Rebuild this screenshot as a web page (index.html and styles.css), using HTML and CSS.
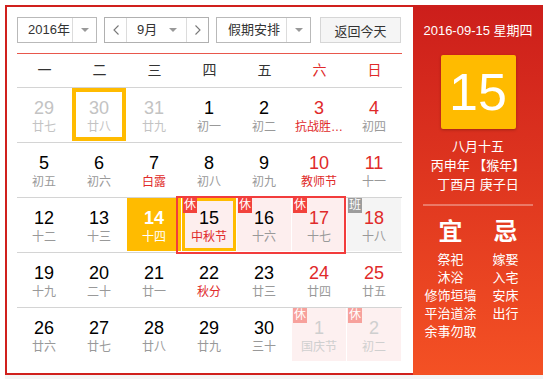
FILE: index.html
```html
<!DOCTYPE html>
<html lang="zh">
<head>
<meta charset="utf-8">
<title>万年历</title>
<link rel="stylesheet" href="styles.css">
</head>
<body>
<div class="calendar">
  <div class="main">
    <div class="toolbar">
      <div class="select year"><span class="sel-text">2016年</span><span class="sel-arrow"><i class="tri"></i></span></div>
      <div class="month-group">
        <span class="nav"><svg width="6" height="10" viewBox="0 0 6 10"><polyline points="5.5,0.5 1,5 5.5,9.5" fill="none" stroke="#777" stroke-width="1.1"/></svg></span>
        <span class="month-sel"><span>9月</span><i class="tri"></i></span>
        <span class="nav next"><svg width="6" height="10" viewBox="0 0 6 10"><polyline points="0.5,0.5 5,5 0.5,9.5" fill="none" stroke="#777" stroke-width="1.1"/></svg></span>
      </div>
      <div class="select holiday"><span class="sel-text">假期安排</span><span class="sel-arrow"><i class="tri"></i></span></div>
      <button class="today-btn">返回今天</button>
    </div>
    <div class="weekdays">
      <span>一</span><span>二</span><span>三</span><span>四</span><span>五</span><span class="wk">六</span><span class="wk">日</span>
    </div>
    <div class="week">
      <div class="day other"><b>29</b><i>廿七</i></div>
      <div class="day other hover"><b>30</b><i>廿八</i></div>
      <div class="day other"><b>31</b><i>廿九</i></div>
      <div class="day"><b>1</b><i>初一</i></div>
      <div class="day"><b>2</b><i>初二</i></div>
      <div class="day wk fest"><b>3</b><i>抗战胜…</i></div>
      <div class="day wk"><b>4</b><i>初四</i></div>
    </div>
    <div class="week">
      <div class="day"><b>5</b><i>初五</i></div>
      <div class="day"><b>6</b><i>初六</i></div>
      <div class="day fest"><b>7</b><i>白露</i></div>
      <div class="day"><b>8</b><i>初八</i></div>
      <div class="day"><b>9</b><i>初九</i></div>
      <div class="day wk fest"><b>10</b><i>教师节</i></div>
      <div class="day wk"><b>11</b><i>十一</i></div>
    </div>
    <div class="week">
      <div class="day"><b>12</b><i>十二</i></div>
      <div class="day"><b>13</b><i>十三</i></div>
      <div class="day today"><b>14</b><i>十四</i></div>
      <div class="day rest sel fest"><span class="badge">休</span><b>15</b><i>中秋节</i></div>
      <div class="day rest"><span class="badge">休</span><b>16</b><i>十六</i></div>
      <div class="day rest wk"><span class="badge">休</span><b>17</b><i>十七</i></div>
      <div class="day work wk"><span class="badge">班</span><b>18</b><i>十八</i></div>
      <div class="range"></div>
    </div>
    <div class="week">
      <div class="day"><b>19</b><i>十九</i></div>
      <div class="day"><b>20</b><i>二十</i></div>
      <div class="day"><b>21</b><i>廿一</i></div>
      <div class="day fest"><b>22</b><i>秋分</i></div>
      <div class="day"><b>23</b><i>廿三</i></div>
      <div class="day wk"><b>24</b><i>廿四</i></div>
      <div class="day wk"><b>25</b><i>廿五</i></div>
    </div>
    <div class="week">
      <div class="day"><b>26</b><i>廿六</i></div>
      <div class="day"><b>27</b><i>廿七</i></div>
      <div class="day"><b>28</b><i>廿八</i></div>
      <div class="day"><b>29</b><i>廿九</i></div>
      <div class="day"><b>30</b><i>三十</i></div>
      <div class="day rest faded"><span class="badge">休</span><b>1</b><i>国庆节</i></div>
      <div class="day rest faded"><span class="badge">休</span><b>2</b><i>初二</i></div>
    </div>
  </div>
  <div class="side">
    <div class="s-date">2016-09-15 星期四</div>
    <div class="s-big">15</div>
    <div class="s-lunar">
      <div>八月十五</div>
      <div>丙申年 【猴年】</div>
      <div>丁酉月 庚子日</div>
    </div>
    <div class="s-line"></div>
    <div class="yiji">
      <div class="col">
        <h3>宜</h3>
        <ul><li>祭祀</li><li>沐浴</li><li>修饰垣墙</li><li>平治道涂</li><li>余事勿取</li></ul>
      </div>
      <div class="col">
        <h3>忌</h3>
        <ul><li>嫁娶</li><li>入宅</li><li>安床</li><li>出行</li></ul>
      </div>
    </div>
  </div>
</div>
<div class="under"></div>
</body>
</html>
```
FILE: styles.css
```css
* { box-sizing: border-box; }
body {
  margin: 0;
  background: #fff;
  font-family: "Liberation Sans", "Noto Sans CJK SC", sans-serif;
  color: #333;
}
.calendar {
  display: flex;
  width: 538px;
  height: 370px;
  margin: 5px 0 0 5px;
}
.main {
  width: 408px;
  border: 2px solid #d0201d;
  border-right: 0;
  padding: 10px 11px 11px 10px;
}
.toolbar {
  display: flex;
  height: 37px;
  padding-bottom: 10px;
  border-bottom: 1px solid #e8574c;
  font-size: 13px;
}
.select {
  display: flex;
  height: 26px;
  border: 1px solid #b9b9b9;
  background: #fff;
}
.year { width: 80px; margin-right: 7px; }
.holiday { width: 95px; margin-left: 7px; }
.sel-text {
  flex: 1;
  line-height: 24px;
  padding-left: 10px;
}
.holiday .sel-text { padding-left: 11px; }
.sel-arrow {
  width: 24px;
  border-left: 1px solid #dcdcdc;
  display: flex;
  align-items: center;
  justify-content: center;
}
.tri {
  display: block;
  width: 0;
  height: 0;
  border-left: 4px solid transparent;
  border-right: 4px solid transparent;
  border-top: 4px solid #999;
}
.month-group {
  display: flex;
  width: 105px;
  height: 26px;
  border: 1px solid #b0b0b0;
}
.nav {
  width: 22px;
  display: flex;
  align-items: center;
  justify-content: center;
  border-right: 1px solid #dcdcdc;
}
.nav.next { border-right: 0; border-left: 1px solid #dcdcdc; }
.month-sel {
  flex: 1;
  display: flex;
  align-items: center;
  padding: 0 9px 0 10px;
  line-height: 24px;
}
.month-sel .tri { margin-left: auto; }
.today-btn {
  margin-left: 9px;
  width: 81px;
  height: 26px;
  border: 1px solid #d6d6d6;
  background: #f5f5f5;
  color: #333;
  font-family: inherit;
  font-size: 13px;
  padding: 0;
}
.weekdays {
  display: grid;
  grid-template-columns: repeat(7, 55px);
  height: 33px;
  line-height: 33px;
  text-align: center;
  font-size: 14px;
  color: #333;
}
.weekdays .wk { color: #e02a2a; }
.week {
  position: relative;
  display: grid;
  grid-template-columns: repeat(7, 55px);
  height: 55px;
  border-top: 1px solid #d4d4d4;
}
.day {
  position: relative;
  margin: 0 1px 1px 0;
  text-align: center;
}
.day b {
  display: block;
  font-weight: normal;
  font-size: 18px;
  line-height: 20px;
  padding-top: 10px;
  color: #000;
}
.day i {
  display: block;
  font-style: normal;
  font-size: 12px;
  line-height: 18px;
  color: #999;
}
.day.wk b { color: #e02a2a; }
.day.fest i { color: #e02a2a; }
.day.other b, .day.other i { color: #c3c3c3; }
.day.hover { box-shadow: inset 0 0 0 4px #ffbb00; }
.day.today { background: #ffbb00; }
.day.today b { color: #fff; font-weight: bold; }
.day.today i { color: #fff; }
.day.rest { background: #fdeeee; }
.day.sel { box-shadow: inset 0 0 0 3px #ffbb00; }
.day.work { background: #f4f4f4; }
.badge {
  position: absolute;
  left: 1px;
  top: 0;
  width: 14px;
  height: 15px;
  background: #f2423c;
  color: #fff;
  font-size: 12px;
  line-height: 15px;
  text-align: center;
}
.work .badge { background: #9c9c9c; }
.day.faded { background: #fdf0f0; }
.day.faded b, .day.faded i { color: #cfcfcf; }
.faded .badge { background: #f7a19c; }
.range {
  position: absolute;
  z-index: 2;
  left: 159px;
  top: -2px;
  width: 170px;
  height: 58px;
  border: 2px solid #f23c3c;
  pointer-events: none;
}
.side {
  width: 130px;
  background: linear-gradient(180deg, #cc1e1b 0%, #f45124 100%);
  color: #fff;
  text-align: center;
  padding-top: 17px;
}
.s-date { font-size: 13px; line-height: 18px; }
.s-big {
  width: 75px;
  height: 74px;
  margin: 15px auto 0;
  background: #ffbb00;
  border-radius: 2px;
  box-shadow: 0 1px 3px rgba(0, 0, 0, 0.25);
  font-size: 52px;
  line-height: 74px;
}
.s-lunar {
  margin-top: 8px;
  font-size: 13px;
  line-height: 19px;
}
.s-line {
  height: 2px;
  margin: 10px 10px 0;
  background: rgba(255, 255, 255, 0.32);
}
.yiji {
  display: flex;
  margin: 11px 10px 0;
}
.col { flex: 1; }
.col h3 {
  margin: 0;
  font-size: 24px;
  line-height: 30px;
  font-weight: bold;
}
.col ul {
  list-style: none;
  margin: 4px 0 0;
  padding: 0;
  font-size: 13px;
  line-height: 18px;
}
.under {
  width: 538px;
  height: 4px;
  margin-left: 5px;
  background: #f4f4f4;
}
```
